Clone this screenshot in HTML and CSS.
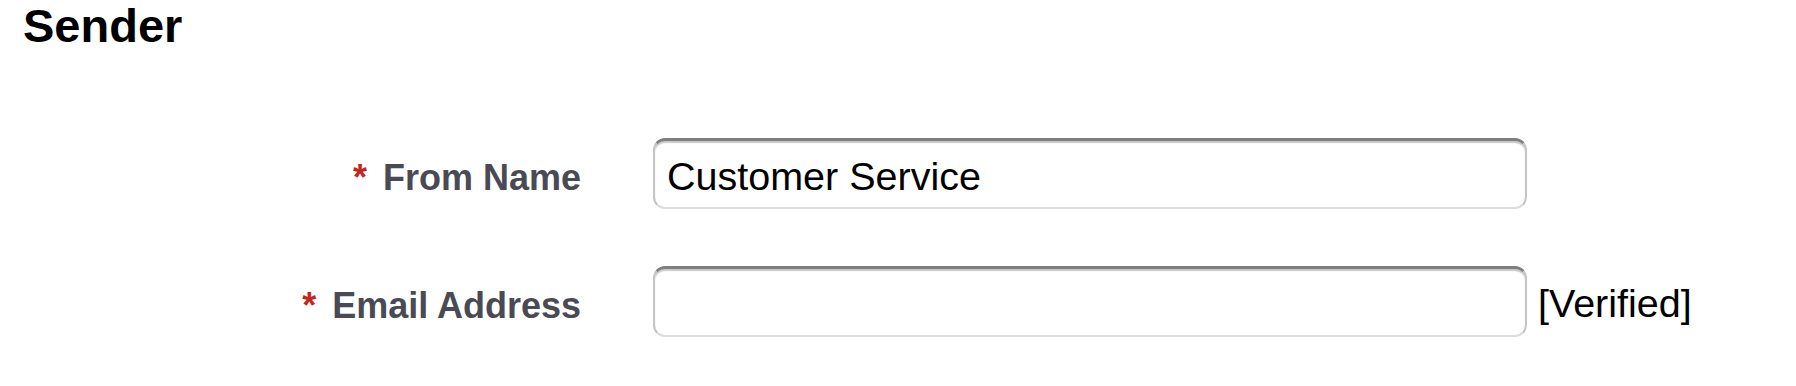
FILE: index.html
```html
<!DOCTYPE html>
<html lang="en">
<head>
    <meta charset="utf-8">
    <title>Sender</title>
    <meta name="viewport" content="width=device-width, initial-scale=1">
    <link rel="stylesheet" href="styles.css">
</head>
<body>
    <section class="sender">
        <h2 class="section-title">Sender</h2>

        <div class="form-grid">
            <label class="field-label" for="fromName"><span class="required">*</span>From Name</label>
            <input type="text" id="fromName" class="text-input" value="Customer Service">
            <span class="field-note"></span>

            <label class="field-label" for="emailAddress"><span class="required">*</span>Email Address</label>
            <input type="text" id="emailAddress" class="text-input" value="">
            <span class="field-note">[Verified]</span>
        </div>
    </section>
</body>
</html>
```

FILE: styles.css
```css
body {
    margin: 0;
    padding: 0;
    background: #ffffff;
    color: #000000;
    font-family: "Liberation Sans", Arial, Helvetica, sans-serif;
}
.sender {
    padding: 2px 0 0 23px;
}
.section-title {
    margin: 0;
    font-size: 47px;
    font-weight: bold;
    line-height: 1;
    color: #000000;
}
.form-grid {
    display: grid;
    grid-template-columns: 558px 874px auto;
    column-gap: 72px;
    row-gap: 57px;
    align-items: center;
    margin-top: 89px;
}
.field-label {
    padding-top: 8px;
    text-align: right;
    font-size: 36px;
    font-weight: bold;
    color: #4a4a55;
    white-space: nowrap;
}
.required {
    color: #c0281e;
    margin-right: 16px;
}
.text-input {
    box-sizing: border-box;
    width: 874px;
    height: 71px;
    margin: 0;
    padding: 5px 12px 0;
    background: #ffffff;
    border: 2px solid #c4c4c4;
    border-top: 3px solid #7f7f7f;
    border-bottom-color: #dcdcdc;
    border-radius: 12px;
    box-shadow: inset 0 2px 1px #c9c9c9;
    font-family: "Liberation Sans", Arial, Helvetica, sans-serif;
    font-size: 39.5px;
    color: #000000;
    outline: none;
}
.field-note {
    margin-left: -61px;
    padding-top: 4px;
    font-size: 39.5px;
    color: #000000;
}
```
